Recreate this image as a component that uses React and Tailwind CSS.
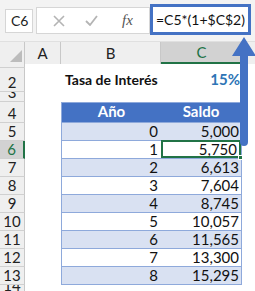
import React from "react";

const font = { fontFamily: "Lato, 'Liberation Sans', sans-serif" };

const rows = [
    { n: 0, v: "5,000" },
    { n: 1, v: "5,750" },
    { n: 2, v: "6,613" },
    { n: 3, v: "7,604" },
    { n: 4, v: "8,745" },
    { n: 5, v: "10,057" },
    { n: 6, v: "11,565" },
    { n: 7, v: "13,300" },
    { n: 8, v: "15,295" },
];

// row header cell on the left edge of the sheet
function RowHead({ label, h, active }) {
    return (
        <div
            className={
                "w-[25px] shrink-0 flex items-end justify-center overflow-hidden border-b border-[#d0d0d0] text-[15px] leading-[15px] " +
                (active
                    ? "bg-[#d2d2d2] text-[#217346] border-r-2 border-r-[#217346]"
                    : "bg-[#efefef] text-[#222] border-r border-r-[#c8c8c8]")
            }
            style={{ height: h }}
        >
            <span className="pb-[1px]">{label}</span>
        </div>
    );
}

function Toolbar() {
    return (
        <div className="h-[41px] bg-[#f3f3f3] flex items-center pl-[5px]">
            <div className="w-[28px] h-[24px] bg-white border border-[#d6d6d6] flex items-center pl-[5px] text-[14px] text-[#222]">
                C6
            </div>
            <div className="ml-[3px] w-[114px] h-[27px] bg-white border border-[#d6d6d6] flex items-center">
                <svg width="12" height="12" viewBox="0 0 12 12" className="ml-[16px]">
                    <path d="M1 1L11 11M11 1L1 11" stroke="#b4b4b4" strokeWidth="1.6" />
                </svg>
                <svg width="13" height="11" viewBox="0 0 13 11" className="ml-[20px]">
                    <path d="M1 6L5 10L12 1" stroke="#b4b4b4" strokeWidth="1.8" fill="none" />
                </svg>
                <span
                    className="ml-[24px] italic text-[15px] text-[#555]"
                    style={{ fontFamily: "'Liberation Serif', serif" }}
                >
                    fx
                </span>
            </div>
            <div className="w-[101px] h-[31px] -mt-[3px] bg-white border-[3px] border-[#4472c4] flex items-center justify-center text-[14px] text-[#111]">
                =C5*(1+$C$2)
            </div>
        </div>
    );
}

function ColumnHeads() {
    return (
        <div className="flex h-[23px] bg-[#efefef] border-t border-[#e0e0e0] text-[15px] text-[#222]">
            <div className="w-[25px] border-r border-[#c8c8c8] relative overflow-hidden">
                <div className="absolute right-[2px] bottom-[2px] w-0 h-0 border-l-[12px] border-l-transparent border-b-[12px] border-b-[#bcbcbc]" />
            </div>
            <div className="w-[36px] border-r border-[#c8c8c8] flex items-center justify-center">A</div>
            <div className="w-[100px] border-r border-[#c8c8c8] flex items-center justify-center">B</div>
            <div className="w-[81px] bg-[#d2d2d2] border-b-2 border-[#217346] text-[#217346] flex items-center justify-center">C</div>
            <div className="flex-1 border-l border-[#c8c8c8]" />
        </div>
    );
}

export default function App() {
    return (
        <div className="w-[255px] h-[291px] bg-white relative overflow-hidden" style={font}>
            <Toolbar />
            <ColumnHeads />

            {/* row 1 */}
            <div className="flex">
                <RowHead label="1" h={4} />
            </div>

            {/* row 2: rate */}
            <div className="flex h-[24px]">
                <RowHead label="2" h={24} />
                <div className="w-[36px]" />
                <div className="w-[100px] flex items-end pb-[2px] pl-[4px] font-bold text-[14px] text-[#111]">Tasa de Interés</div>
                <div className="w-[81px] flex items-end justify-end pb-[2px] pr-[2px] font-bold text-[15px] text-[#2e75b6]">15%</div>
            </div>

            {/* row 3 */}
            <div className="flex">
                <RowHead label="3" h={10} />
            </div>

            {/* row 4: table header */}
            <div className="flex h-[21px]">
                <RowHead label="4" h={21} />
                <div className="w-[36px]" />
                <div className="w-[181px] bg-[#4472c4] flex font-bold text-[15px] text-white border border-[#8ea9db]">
                    <div className="w-[99px] flex items-end justify-center">Año</div>
                    <div className="flex-1 flex items-end justify-center">Saldo</div>
                </div>
            </div>

            {rows.map((r, i) => (
                <div key={r.n} className="flex h-[18px]">
                    <RowHead label={String(i + 5)} h={18} active={i === 1} />
                    <div className="w-[36px]" />
                    <div
                        className={
                            "w-[181px] flex text-[15px] leading-[17px] text-[#111] border-x border-b border-[#8ea9db] " +
                            (i % 2 === 0 ? "bg-[#d9e1f2]" : "bg-white")
                        }
                    >
                        <div className="w-[99px] flex items-end justify-end pr-[3px]">{r.n}</div>
                        <div
                            className={
                                "flex-1 flex items-end justify-end pr-[2px] relative " +
                                (i === 1 ? "border-2 border-[#217346] -mt-[1px] leading-[14px]" : "")
                            }
                        >
                            {r.v}
                            {i === 1 && (
                                <div className="absolute -right-[4px] -bottom-[4px] w-[5px] h-[5px] bg-[#217346] border border-white" />
                            )}
                        </div>
                    </div>
                </div>
            ))}

            {/* row 14 */}
            <div className="flex">
                <RowHead label="14" h={10} />
            </div>

            {/* callout arrow pointing at the formula */}
            <svg className="absolute left-[231px] top-[36px]" width="26" height="112" viewBox="0 0 26 112">
                <path d="M13 1L25 20H17V106A4 4 0 0 1 9 106V20H1Z" fill="#4472c4" />
            </svg>
        </div>
    );
}
